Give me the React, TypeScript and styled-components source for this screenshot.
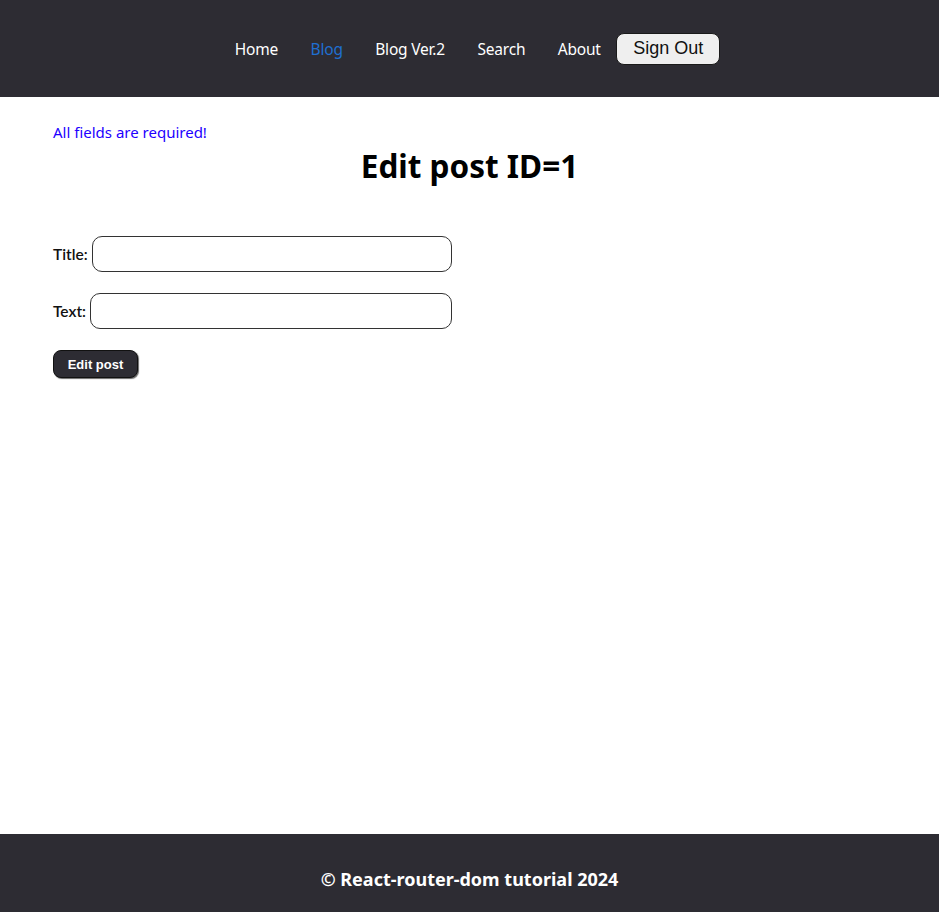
import React from 'react';
import styled, { createGlobalStyle } from 'styled-components';

const GlobalStyle = createGlobalStyle`
  html, body {
    margin: 0;
    padding: 0;
  }
  body {
    font-family: Lato, "Open Sans", sans-serif;
    background: #fff;
  }
`;

const Page = styled.div`
  min-height: 100vh;
  display: flex;
  flex-direction: column;
`;

const Header = styled.header`
  height: 97px;
  background: #2d2c33;
  display: flex;
  justify-content: center;
  align-items: center;
`;

const Nav = styled.nav`
  display: flex;
  align-items: center;
  gap: 32.5px;
  margin-left: 16px;
`;

const NavLink = styled.a<{ active?: boolean }>`
  color: ${p => (p.active ? '#1f6fd1' : '#ffffff')};
  text-decoration: none;
  font-family: "Noto Sans", "Open Sans", sans-serif;
  font-size: 15.5px;
  letter-spacing: -0.2px;
  margin-top: 1px;
`;

const SignOut = styled.button`
  margin-left: -17px;
  width: 104px;
  height: 32px;
  background: #efefef;
  border: 1px solid #1a1a1a;
  border-radius: 8px;
  font-family: "Liberation Sans", Arial, sans-serif;
  font-size: 18px;
  color: #111;
  padding: 0;
`;

const Main = styled.main`
  flex: 1;
  padding: 25px 53px 0;
`;

const Notice = styled.div`
  color: #2200ff;
  font-family: "Noto Sans", "Open Sans", sans-serif;
  font-size: 15px;
  line-height: 20px;
`;

const Title = styled.h1`
  margin: 4px 0 0;
  text-align: center;
  font-family: "Noto Sans", "Open Sans", sans-serif;
  font-size: 31.5px;
  font-weight: 700;
  line-height: 40px;
`;

const Form = styled.form`
  margin-top: 50px;
  display: flex;
  flex-direction: column;
  gap: 21px;
  align-items: flex-start;
`;

const Row = styled.label`
  display: flex;
  align-items: center;
  gap: 4px;
  font-size: 15.5px;
  font-weight: 600;
  color: #111;
`;

const Input = styled.input<{ w: number }>`
  width: ${p => p.w}px;
  height: 36px;
  box-sizing: border-box;
  border: 1px solid #333;
  border-radius: 10px;
  padding: 0 10px;
  font-size: 15px;
`;

const SubmitButton = styled.button`
  width: 85px;
  height: 28px;
  background: #2d2c33;
  color: #fff;
  border: 1px solid #111;
  border-radius: 8px;
  box-shadow: 1px 1px 1px rgba(0, 0, 0, 0.6);
  font-family: "Liberation Sans", Arial, sans-serif;
  font-size: 13px;
  font-weight: 700;
  padding: 0;
`;

const Footer = styled.footer`
  height: 78px;
  background: #2d2c33;
  display: flex;
  justify-content: center;
  align-items: center;
  color: #fff;
  font-family: "Noto Sans", "Open Sans", sans-serif;
  font-weight: 700;
  font-size: 18px;
  padding-top: 12px;
  box-sizing: border-box;
`;

export default function App() {
  return (
    <Page>
      <GlobalStyle />
      <Header>
        <Nav>
          <NavLink href="#">Home</NavLink>
          <NavLink href="#" active>Blog</NavLink>
          <NavLink href="#">Blog Ver.2</NavLink>
          <NavLink href="#">Search</NavLink>
          <NavLink href="#">About</NavLink>
          <SignOut>Sign Out</SignOut>
        </Nav>
      </Header>
      <Main>
        <Notice>All fields are required!</Notice>
        <Title>Edit post ID=1</Title>
        <Form onSubmit={e => e.preventDefault()}>
          <Row>
            Title: <Input type="text" w={360} />
          </Row>
          <Row>
            Text: <Input type="text" w={362} />
          </Row>
          <SubmitButton type="submit">Edit post</SubmitButton>
        </Form>
      </Main>
      <Footer>© React-router-dom tutorial 2024</Footer>
    </Page>
  );
}
